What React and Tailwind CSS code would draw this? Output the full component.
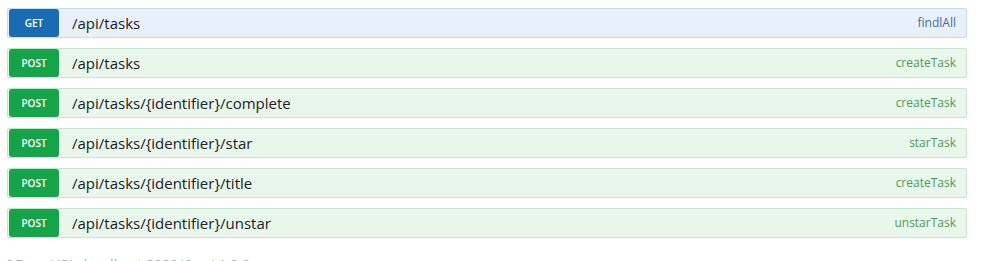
const ops = [
  { method: 'GET', path: '/api/tasks', id: 'findlAll' },
  { method: 'POST', path: '/api/tasks', id: 'createTask' },
  { method: 'POST', path: '/api/tasks/{identifier}/complete', id: 'createTask' },
  { method: 'POST', path: '/api/tasks/{identifier}/star', id: 'starTask' },
  { method: 'POST', path: '/api/tasks/{identifier}/title', id: 'createTask' },
  { method: 'POST', path: '/api/tasks/{identifier}/unstar', id: 'unstarTask' },
];

function OpRow({ op }) {
  const get = op.method === 'GET';
  return (
    <div
      className={
        get
          ? 'flex items-center h-[30px] rounded-[2px] border border-[#c9d9ea] bg-[#e8f0f9]'
          : 'flex items-center h-[30px] rounded-[2px] border border-[#c5e3cd] bg-[#e8f6ec]'
      }
    >
      <div
        className={
          get
            ? 'ml-px w-[50px] h-[28px] rounded-[3px] bg-[#1b6bb3] flex items-center justify-center text-white text-[10px] font-semibold'
            : 'ml-px w-[50px] h-[28px] rounded-[3px] bg-[#17a34a] flex items-center justify-center text-white text-[10px] font-semibold'
        }
      >
        {op.method}
      </div>
      <div className="pl-[13px] text-[15px] text-[#222]">{op.path}</div>
      <div
        className={
          get
            ? 'ml-auto pr-[10px] text-[12px] text-[#3f6ea3]'
            : 'ml-auto pr-[10px] text-[12px] text-[#4b9a5d]'
        }
      >
        {op.id}
      </div>
    </div>
  );
}

export default function App() {
  return (
    <div className="w-[994px] h-[261px] overflow-hidden bg-white font-['Open_Sans',sans-serif]">
      <div className="pt-[8px] pl-[7px] w-[967px] flex flex-col gap-[10px]">
        {ops.map((op, i) => (
          <OpRow key={i} op={op} />
        ))}
      </div>
      {/* next section, cut off by the window */}
      <div className="pl-[7px] pt-[20px] text-[14px] text-[#aaa] leading-none">
        [ Base URL: localhost:8080/ ]  api 1.0.0
      </div>
    </div>
  );
}
